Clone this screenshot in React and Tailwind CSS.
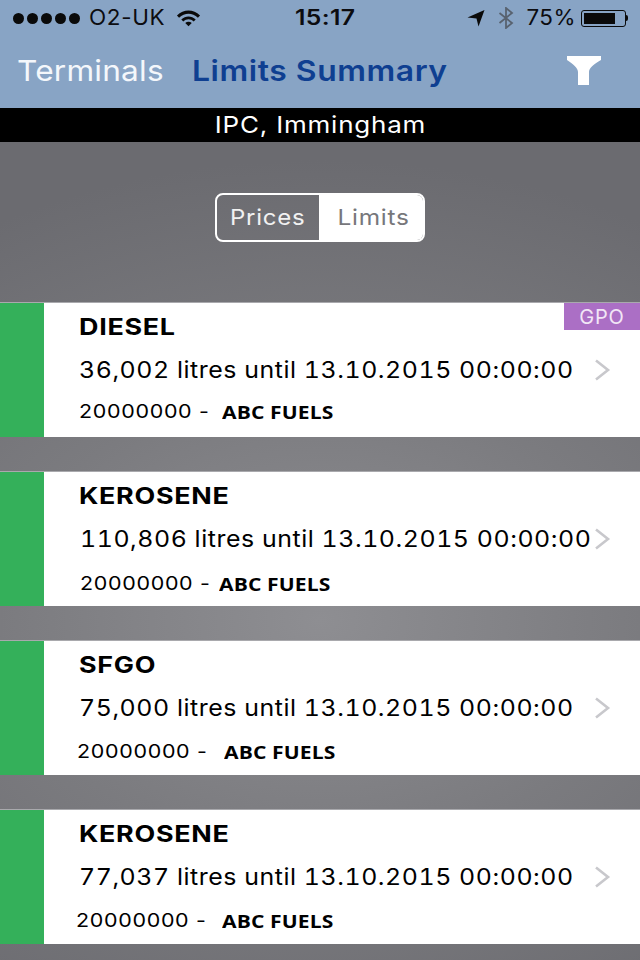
const FONT = "font-['Inter','Liberation_Sans',sans-serif]";

function Wifi() {
  return (
    <svg width="25" height="18" viewBox="0 0 26 18" className="ml-[16px]">
      <path d="M1 6.5C8 -0.5 18 -0.5 25 6.5L22.8 8.7C17 3.2 9 3.2 3.2 8.7Z" fill="#0a0a0a" />
      <path d="M5.5 10.5C10 6.3 16 6.3 20.5 10.5L18.4 12.6C15 9.6 11 9.6 7.6 12.6Z" fill="#0a0a0a" />
      <path d="M9.6 14.3C11.7 12.6 14.3 12.6 16.4 14.3L13 17.6Z" fill="#0a0a0a" />
    </svg>
  );
}

function Chevron() {
  return (
    <svg width="17" height="22" viewBox="0 0 17 22" className="absolute left-[594px] top-[56px]">
      <path d="M2 1.5L14 11L2 20.5" fill="none" stroke="#c8c8cc" strokeWidth="2.6" />
    </svg>
  );
}

const rows = [
  { name: "DIESEL", qty: "36,002 litres until 13.10.2015 00:00:00", qtyClass: "pl-[35px]", idClass: "pl-[35px]", dash: "w-[143px]", top: "mt-[16px]", gpo: true },
  { name: "KEROSENE", qty: "110,806 litres until 13.10.2015 00:00:00", qtyClass: "pl-[36px]", idClass: "pl-[36px]", dash: "w-[139px]", top: "mt-[19px]" },
  { name: "SFGO", qty: "75,000 litres until 13.10.2015 00:00:00", qtyClass: "pl-[35px]", idClass: "pl-[33px]", dash: "w-[147px]", top: "mt-[18px]" },
  { name: "KEROSENE", qty: "77,037 litres until 13.10.2015 00:00:00", qtyClass: "pl-[35px]", idClass: "pl-[32px]", dash: "w-[146px]", top: "mt-[18px]" },
];

function Row({ r }) {
  return (
    <div className="relative flex h-[135px] bg-white border-t border-[#a9a9ad]">
      <div className="w-[44px] shrink-0 bg-[#34b05a]" />
      <div className="flex-1 text-black">
        <div className="pl-[35px] pt-[10px] text-[23px] leading-[28px] font-bold tracking-[0.6px]">
          <span className="inline-block origin-left scale-x-[1.17]">{r.name}</span>
        </div>
        <div className={`mt-[15px] text-[23px] leading-[28px] whitespace-nowrap tabular-nums ${r.qtyClass}`}>
          <span className="inline-block origin-left scale-x-[1.083] tracking-[0.5px]">{r.qty}</span>
        </div>
        <div className={`flex items-center text-[19px] leading-[24px] whitespace-nowrap ${r.top} ${r.idClass}`}>
          <span className={r.dash}>
            <span className="inline-block origin-left scale-x-[1.13] tracking-[0.6px]">20000000 -</span>
          </span>
          <span className="inline-block origin-left scale-x-[1.17] font-['Open_Sans',sans-serif] font-bold text-[18px] tracking-[0.1px]">ABC FUELS</span>
        </div>
      </div>
      <Chevron />
      {r.gpo && (
        <div className="absolute right-0 top-0 flex h-[27px] w-[76px] items-center justify-center bg-[#ab6fc5] text-[20px] tracking-[0.8px] text-[#f2e6f6]">
          GPO
        </div>
      )}
    </div>
  );
}

export default function App() {
  return (
    <div className={`h-[960px] w-[640px] overflow-hidden bg-[radial-gradient(ellipse_640px_460px_at_50%_620px,#8e8e92_0%,#7b7b7f_50%,#6b6b70_100%)] ${FONT}`}>
      <div className="h-[108px] bg-[#88a4c5]">
        <div className="relative flex h-[36px] items-center pl-[13px] pr-[12px] text-[21px] text-[#0c0c10]">
          <div className="flex gap-[3px]">
            <i className="h-[11px] w-[11px] rounded-full bg-[#0a0a0a]" />
            <i className="h-[11px] w-[11px] rounded-full bg-[#0a0a0a]" />
            <i className="h-[11px] w-[11px] rounded-full bg-[#0a0a0a]" />
            <i className="h-[11px] w-[11px] rounded-full bg-[#0a0a0a]" />
            <i className="h-[11px] w-[11px] rounded-full bg-[#0a0a0a]" />
          </div>
          <span className="ml-[9px] inline-block origin-left scale-x-[1.07] tracking-[0.6px]">O2-UK</span>
          <Wifi />
          <span className="absolute left-[295px] inline-block origin-left scale-x-[1.18] font-semibold tracking-[0.3px]">15:17</span>
          <div className="ml-auto flex items-center">
            <svg width="18" height="18" viewBox="0 0 18 18">
              <path d="M0.5 8.5L17.5 1L11.5 17.5L9.5 9.5Z" fill="#0a0a0a" />
            </svg>
            <svg width="16" height="22" viewBox="0 0 16 22" className="ml-[13px]">
              <path d="M1.5 6L14 16L8 21V1L14 6L1.5 16" fill="none" stroke="#58626f" strokeWidth="1.8" />
            </svg>
            <span className="ml-[14px] inline-block scale-x-[1.07] tracking-[0.4px]">75%</span>
            <div className="ml-[7px] flex h-[17px] w-[45px] items-center rounded-[3px] border border-[#0a0a0a] p-[2px]">
              <div className="h-full w-[31px] bg-[#0a0a0a]" />
            </div>
            <div className="h-[6px] w-[2px] rounded-r-full bg-[#0a0a0a]" />
          </div>
        </div>
        <div className="flex h-[72px] items-center pb-[2px] pl-[17px]">
          <span className="inline-block origin-left scale-x-[1.09] text-[29px] text-[#f4f7fb] tracking-[0.2px]">Terminals</span>
          <span className="ml-[40px] inline-block origin-left scale-x-[1.1] text-[29px] font-semibold text-[#0f3f91] tracking-[0.5px]">Limits Summary</span>
          <svg width="34" height="30" viewBox="0 0 34 30" className="ml-auto mr-[39px]">
            <path d="M0 0H34V4C27 8 22 12 22 16V29H11V16C11 12 6 8 0 4Z" fill="#fff" />
          </svg>
        </div>
      </div>
      <div className="flex h-[34px] items-center justify-center bg-black text-[23px] tracking-[0.7px] text-white">
        <span className="inline-block scale-x-[1.13]">IPC, Immingham</span>
      </div>
      <div className="flex h-[160px] items-start justify-center pt-[51px]">
        <div className="flex h-[49px] w-[210px] overflow-hidden rounded-[8px] border-2 border-white text-[22px] tracking-[0.7px]">
          <div className="flex w-[102px] items-center justify-center text-[#f1f1f1]">
            <span className="inline-block scale-x-[1.09]">Prices</span>
          </div>
          <div className="flex flex-1 items-center justify-center bg-white pl-[6px] text-[#77777b]">
            <span className="inline-block scale-x-[1.11]">Limits</span>
          </div>
        </div>
      </div>
      <div className="flex flex-col gap-[34px]">
        {rows.map((r, i) => (
          <Row key={i} r={r} />
        ))}
      </div>
    </div>
  );
}
